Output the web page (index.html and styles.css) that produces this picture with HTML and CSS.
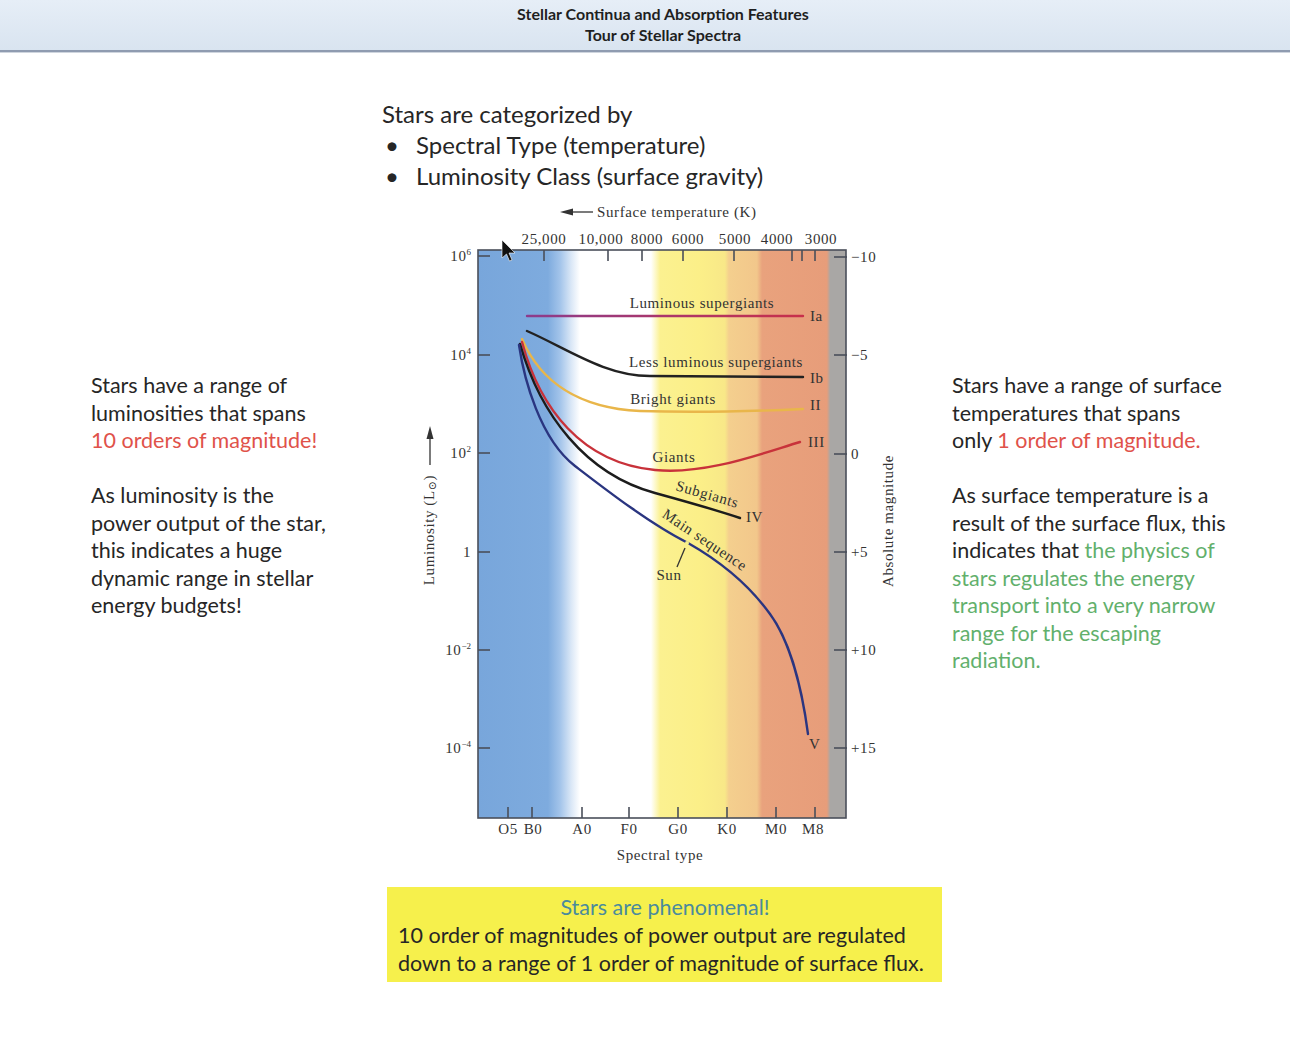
FILE: index.html
```html
<!DOCTYPE html>
<html lang="en">
<head>
<meta charset="utf-8">
<title>Tour of Stellar Spectra</title>
<link rel="stylesheet" href="styles.css">
</head>
<body>
<header class="title-bar">
  <div>Stellar Continua and Absorption Features</div>
  <div>Tour of Stellar Spectra</div>
</header>
<main class="slide">
  <section class="side side-left">
    <p>Stars have a range of<br>luminosities that spans<br><span class="red">10 orders of magnitude!</span></p>
    <p>As luminosity is the<br>power output of the star,<br>this indicates a huge<br>dynamic range in stellar<br>energy budgets!</p>
  </section>
  <section class="center">
    <div class="intro">
      <p>Stars are categorized by</p>
      <ul>
        <li>Spectral Type (temperature)</li>
        <li>Luminosity Class (surface gravity)</li>
      </ul>
    </div>
    <svg class="hr-diagram" viewBox="382 192 540 680" width="540" height="680" xmlns="http://www.w3.org/2000/svg">
      <defs>
        <linearGradient id="bands" gradientUnits="userSpaceOnUse" x1="478" y1="0" x2="846" y2="0">
          <stop offset="0" stop-color="#78a6db"/>
          <stop offset="0.19" stop-color="#7eabde"/>
          <stop offset="0.223" stop-color="#a3c4ea"/>
          <stop offset="0.255" stop-color="#dde9f7"/>
          <stop offset="0.277" stop-color="#ffffff"/>
          <stop offset="0.47" stop-color="#ffffff"/>
          <stop offset="0.495" stop-color="#fbf190"/>
          <stop offset="0.603" stop-color="#fbef88"/>
          <stop offset="0.671" stop-color="#f8e888"/>
          <stop offset="0.682" stop-color="#f4cf8e"/>
          <stop offset="0.758" stop-color="#f2c78b"/>
          <stop offset="0.772" stop-color="#e9a27d"/>
          <stop offset="0.948" stop-color="#e79d7a"/>
          <stop offset="0.957" stop-color="#a9a7a5"/>
          <stop offset="1" stop-color="#a9a7a5"/>
        </linearGradient>
        <linearGradient id="ia" gradientUnits="userSpaceOnUse" x1="527" y1="0" x2="803" y2="0">
          <stop offset="0" stop-color="#8c3c8c"/>
          <stop offset="1" stop-color="#c8304a"/>
        </linearGradient>
      </defs>

      <!-- plot area -->
      <rect x="478" y="251" width="368" height="568" fill="url(#bands)"/>
      <rect x="478" y="251" width="368" height="568" class="frame"/>

      <!-- ticks -->
      <g class="tick">
        <line x1="478" y1="257" x2="490" y2="257"/>
        <line x1="478" y1="356" x2="490" y2="356"/>
        <line x1="478" y1="454" x2="490" y2="454"/>
        <line x1="478" y1="553" x2="490" y2="553"/>
        <line x1="478" y1="651" x2="490" y2="651"/>
        <line x1="478" y1="749" x2="490" y2="749"/>
        <line x1="834" y1="258" x2="847" y2="258"/>
        <line x1="834" y1="356" x2="847" y2="356"/>
        <line x1="834" y1="455" x2="847" y2="455"/>
        <line x1="834" y1="553" x2="847" y2="553"/>
        <line x1="834" y1="651" x2="847" y2="651"/>
        <line x1="834" y1="749" x2="847" y2="749"/>
        <line x1="544" y1="251" x2="544" y2="262"/>
        <line x1="608" y1="251" x2="608" y2="262"/>
        <line x1="642" y1="251" x2="642" y2="262"/>
        <line x1="683" y1="251" x2="683" y2="262"/>
        <line x1="734" y1="251" x2="734" y2="262"/>
        <line x1="792" y1="251" x2="792" y2="262"/>
        <line x1="802" y1="251" x2="802" y2="262"/>
        <line x1="815" y1="251" x2="815" y2="262"/>
        <line x1="508" y1="808" x2="508" y2="819"/>
        <line x1="532" y1="808" x2="532" y2="819"/>
        <line x1="582" y1="808" x2="582" y2="819"/>
        <line x1="629" y1="808" x2="629" y2="819"/>
        <line x1="678" y1="808" x2="678" y2="819"/>
        <line x1="727" y1="808" x2="727" y2="819"/>
        <line x1="776" y1="808" x2="776" y2="819"/>
        <line x1="815" y1="808" x2="815" y2="819"/>
      </g>

      <g class="lbl end">
        <text x="471" y="262">10<tspan class="sup" dy="-6">6</tspan></text>
        <text x="471" y="361">10<tspan class="sup" dy="-6">4</tspan></text>
        <text x="471" y="459">10<tspan class="sup" dy="-6">2</tspan></text>
        <text x="471" y="558">1</text>
        <text x="471" y="656">10<tspan class="sup" dy="-6">−2</tspan></text>
        <text x="471" y="754">10<tspan class="sup" dy="-6">−4</tspan></text>
      </g>
      <g class="lbl">
        <text x="851" y="263">−10</text>
        <text x="851" y="361">−5</text>
        <text x="851" y="460">0</text>
        <text x="851" y="558">+5</text>
        <text x="851" y="656">+10</text>
        <text x="851" y="754">+15</text>
      </g>
      <g class="lbl mid">
        <text x="544" y="245">25,000</text>
        <text x="601" y="245">10,000</text>
        <text x="647" y="245">8000</text>
        <text x="688" y="245">6000</text>
        <text x="735" y="245">5000</text>
        <text x="777" y="245">4000</text>
        <text x="821" y="245">3000</text>
        <text x="508" y="835">O5</text>
        <text x="533" y="835">B0</text>
        <text x="582" y="835">A0</text>
        <text x="629" y="835">F0</text>
        <text x="678" y="835">G0</text>
        <text x="727" y="835">K0</text>
        <text x="776" y="835">M0</text>
        <text x="813" y="835">M8</text>
        <text x="660" y="861">Spectral type</text>
      </g>

      <!-- axis titles -->
      <g class="lbl">
        <text x="597" y="218">Surface temperature (K)</text>
      </g>
      <line x1="572" y1="213" x2="593" y2="213" class="axis-arrow"/>
      <polygon points="560,213 573,209.5 573,216.5" class="arrow-head"/>

      <text class="lbl mid" transform="translate(434 531) rotate(-90)">Luminosity (L<tspan class="sub" dy="2">⊙</tspan><tspan dy="-2">)</tspan></text>
      <line x1="430" y1="439" x2="430" y2="466" class="axis-arrow"/>
      <polygon points="430,427 426.5,440 433.5,440" class="arrow-head"/>
      <text class="lbl mid" transform="translate(893 522) rotate(-90)">Absolute magnitude</text>

      <!-- luminosity class curves -->
      <path d="M527,317 H803" class="curve" stroke="url(#ia)"/>
      <path d="M527,332 C568,350 605,377 650,377 L803,378" class="curve" stroke="#222"/>
      <path d="M522,340 C540,382 578,409 640,412 C700,414 760,412 803,410" class="curve" stroke="#e9b64a"/>
      <path d="M522,343 C540,410 582,464 655,471 C705,476 760,455 800,443" class="curve" stroke="#c8323a"/>
      <path d="M520,345 C540,415 585,475 655,494 C695,505 722,513 740,519" class="curve" stroke="#1c1c1c"/>
      <path d="M519,346 C524,380 540,440 575,467 C605,490 650,525 688,544 C725,565 752,590 770,615 C790,642 802,690 808,735" class="curve" stroke="#2a3580"/>

      <!-- Sun marker -->
      <circle cx="687" cy="544" r="2" fill="#f6f08a"/>
      <line x1="685" y1="549" x2="677" y2="568" class="sun-line"/>

      <!-- curve labels -->
      <g class="lbl mid">
        <text x="702" y="309">Luminous supergiants</text>
        <text x="716" y="368">Less luminous supergiants</text>
        <text x="673" y="405">Bright giants</text>
        <text x="674" y="463">Giants</text>
        <text x="669" y="581">Sun</text>
        <text transform="translate(706 500) rotate(16)">Subgiants</text>
        <text transform="translate(702 545) rotate(34)">Main sequence</text>
      </g>
      <g class="lbl">
        <text x="810" y="322">Ia</text>
        <text x="810" y="384">Ib</text>
        <text x="810" y="411">II</text>
        <text x="808" y="448">III</text>
        <text x="746" y="523">IV</text>
        <text x="809" y="750">V</text>
      </g>

      <!-- mouse pointer over the slide -->
      <polygon points="502,241 502,259 506.5,255 509.5,262 512,261 509,254 515,254" class="cursor"/>
    </svg>
    <div class="callout">
      <div class="callout-title">Stars are phenomenal!</div>
      <div>10 order of magnitudes of power output are regulated<br>down to a range of 1 order of magnitude of surface flux.</div>
    </div>
  </section>
  <section class="side side-right">
    <p>Stars have a range of surface<br>temperatures that spans<br>only <span class="red">1 order of magnitude.</span></p>
    <p>As surface temperature is a<br>result of the surface flux, this<br>indicates that <span class="green">the physics of<br>stars regulates the energy<br>transport into a very narrow<br>range for the escaping<br>radiation.</span></p>
  </section>
</main>
</body>
</html>
```

FILE: styles.css
```css
body {
  margin: 0;
  background: #ffffff;
  font-family: Lato, "Open Sans", "Liberation Sans", sans-serif;
  color: #262626;
}

.title-bar {
  height: 47px;
  padding: 3px 0 0 36px;
  background: linear-gradient(#e6eef7, #d9e4f0);
  border-bottom: 2px solid #8f9bb0;
  box-shadow: 0 1px 0 #cfd5de;
  text-align: center;
  font-weight: 700;
  font-size: 16px;
  line-height: 21px;
  color: #1f1f1f;
}

.slide {
  display: grid;
  grid-template-columns: 382px 563px 1fr;
}

.side {
  padding-top: 320px;
  font-size: 21.5px;
  line-height: 27.5px;
  white-space: nowrap;
}

.side p {
  margin: 0 0 27.5px;
}

.side-left {
  padding-left: 91px;
}

.side-right {
  padding-left: 7px;
}

.red {
  color: #e0524a;
}

.green {
  color: #62b06c;
}

.center {
  padding-top: 46px;
}

.intro {
  font-size: 24px;
  line-height: 31px;
}

.intro p {
  margin: 0;
}

.intro ul {
  margin: 0;
  padding: 0 0 0 3px;
  list-style: none;
}

.intro li::before {
  content: "•";
  display: inline-block;
  width: 31px;
}

.hr-diagram {
  display: block;
}

.frame {
  fill: none;
  stroke: #4a4f5a;
  stroke-width: 1.6;
}

.tick line {
  stroke: #4a4f5a;
  stroke-width: 1.6;
}

.lbl {
  font-family: "Liberation Serif", "DejaVu Serif", serif;
  font-size: 15px;
  letter-spacing: 0.6px;
  fill: #333333;
}

.lbl.end {
  text-anchor: end;
}

.lbl.mid {
  text-anchor: middle;
}

.sup {
  font-size: 9px;
  letter-spacing: 0;
}

.sub {
  font-size: 11px;
  font-family: "DejaVu Serif", serif;
}

.axis-arrow {
  stroke: #333333;
  stroke-width: 1.3;
}

.arrow-head {
  fill: #333333;
}

.curve {
  fill: none;
  stroke-width: 2.4;
  stroke-linecap: round;
}

.sun-line {
  stroke: #333333;
  stroke-width: 1.3;
}

.cursor {
  fill: #111111;
  stroke: #ffffff;
  stroke-width: 0.6;
}

.callout {
  margin: 16px 0 0 5px;
  width: 555px;
  box-sizing: border-box;
  padding: 6px 10px 5px 11px;
  background: #f6f04c;
  font-size: 21.5px;
  line-height: 28px;
  color: #262626;
  white-space: nowrap;
}

.callout-title {
  text-align: center;
  color: #4a8a9c;
}
```
